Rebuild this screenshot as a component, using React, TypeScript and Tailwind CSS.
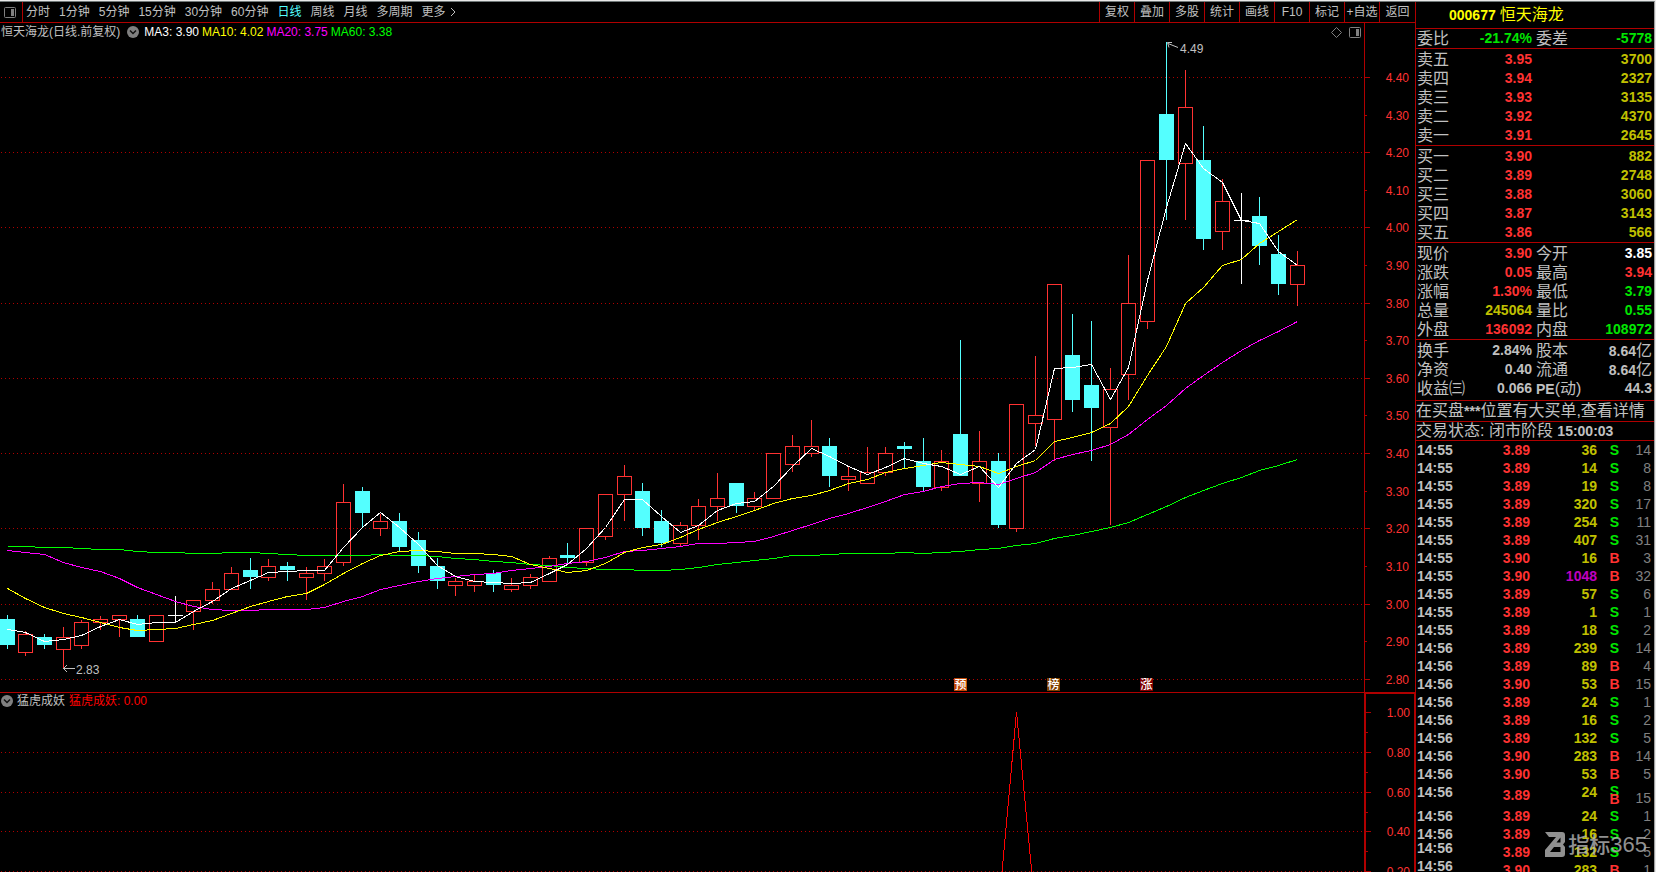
import type { ReactNode } from "react";

const CJK = "font-['Liberation_Sans','Noto_Sans_CJK_SC',sans-serif]";

type Kind = "U" | "D" | "W";
type Candle = [x: number, kind: Kind, high: number, top: number, bottom: number, low: number];

const candles: Candle[] = [
  [7, "D", 615, 619, 645, 649],
  [25, "U", 631, 634, 653, 656],
  [44, "D", 634, 637, 645, 649],
  [63, "U", 627, 637, 650, 668],
  [81, "U", 620, 622, 646, 649],
  [100, "U", 616, 619, 623, 630],
  [119, "U", 615, 615, 620, 637],
  [137, "D", 615, 619, 637, 637],
  [156, "U", 615, 615, 642, 642],
  [175, "W", 596, 615, 616, 622],
  [193, "U", 600, 600, 612, 630],
  [212, "U", 582, 589, 601, 604],
  [231, "U", 567, 573, 590, 590],
  [250, "D", 558, 570, 577, 589],
  [268, "U", 559, 566, 578, 581],
  [287, "D", 562, 566, 570, 581],
  [306, "U", 567, 573, 578, 600],
  [324, "U", 559, 566, 574, 581],
  [343, "U", 484, 502, 563, 566],
  [362, "D", 487, 491, 513, 527],
  [380, "U", 514, 521, 529, 536],
  [399, "D", 513, 521, 547, 551],
  [418, "D", 532, 540, 566, 573],
  [437, "D", 558, 566, 581, 589],
  [455, "U", 578, 581, 586, 596],
  [474, "U", 574, 581, 586, 592],
  [493, "D", 570, 573, 585, 592],
  [511, "U", 578, 585, 590, 592],
  [530, "U", 574, 577, 586, 589],
  [549, "U", 556, 558, 582, 582],
  [567, "D", 543, 555, 558, 565],
  [586, "U", 528, 528, 563, 566],
  [605, "U", 494, 494, 537, 540],
  [624, "U", 465, 476, 495, 521],
  [642, "D", 483, 491, 528, 536],
  [661, "D", 510, 521, 543, 547],
  [680, "U", 522, 525, 544, 546],
  [698, "U", 499, 506, 526, 540],
  [717, "U", 473, 498, 507, 521],
  [736, "D", 483, 483, 506, 513],
  [754, "U", 492, 498, 507, 510],
  [773, "U", 453, 453, 499, 499],
  [792, "U", 435, 446, 465, 472],
  [811, "U", 420, 446, 454, 457],
  [829, "D", 438, 446, 476, 487],
  [848, "U", 466, 476, 480, 491],
  [867, "U", 447, 472, 484, 484],
  [885, "U", 447, 453, 473, 476],
  [904, "D", 442, 446, 449, 468],
  [923, "D", 438, 461, 487, 491],
  [941, "U", 450, 461, 488, 491],
  [960, "D", 340, 434, 476, 476],
  [979, "U", 431, 461, 484, 502],
  [998, "D", 453, 461, 525, 528],
  [1016, "U", 404, 404, 529, 532],
  [1035, "U", 356, 415, 424, 446],
  [1054, "U", 284, 284, 420, 461],
  [1072, "D", 314, 355, 400, 412],
  [1091, "D", 321, 385, 408, 461],
  [1110, "U", 368, 389, 428, 525],
  [1128, "U", 255, 303, 375, 400],
  [1147, "U", 160, 160, 322, 329],
  [1166, "D", 42, 114, 160, 220],
  [1185, "U", 70, 107, 164, 220],
  [1203, "D", 126, 160, 239, 250],
  [1222, "U", 179, 201, 232, 250],
  [1241, "W", 193, 220, 221, 284],
  [1259, "D", 197, 216, 246, 265],
  [1278, "D", 235, 254, 284, 295],
  [1297, "U", 251, 265, 285, 306],
];

const averages: { color: string; ys: number[] }[] = [
  {
    color: "#00ff00",
    ys: [
      546, 546, 547, 547, 548, 549, 549, 551, 552, 552, 553, 553, 552, 552, 553, 554, 555, 555, 555, 555, 554, 555, 555,
      556, 558, 559, 561, 562, 564, 565, 567, 568, 569, 569, 570, 570, 569, 567, 564, 562, 560, 558, 555, 555, 554, 553,
      553, 553, 552, 553, 552, 551, 549, 548, 545, 543, 538, 535, 531, 527, 522, 514, 506, 497, 490, 483, 477, 470, 465,
      459,
    ],
  },
  {
    color: "#ff00ff",
    ys: [
      550, 552, 554, 562, 567, 571, 578, 587, 594, 601, 606, 609, 610, 610, 609, 609, 609, 607, 601, 596, 589, 585, 581,
      578, 576, 574, 573, 570, 568, 566, 563, 561, 557, 551, 550, 548, 546, 543, 543, 542, 541, 536, 530, 524, 518, 513,
      507, 501, 494, 491, 486, 483, 482, 484, 478, 472, 459, 454, 450, 444, 434, 419, 405, 388, 375, 362, 350, 340, 331,
      321,
    ],
  },
  {
    color: "#ffff00",
    ys: [
      588, 598, 607, 613, 617, 622, 627, 630, 629, 628, 624, 620, 613, 606, 601, 596, 593, 584, 573, 563, 555, 551, 550,
      551, 553, 553, 554, 556, 564, 568, 572, 570, 563, 552, 547, 544, 537, 529, 522, 516, 510, 503, 498, 495, 490, 483,
      479, 472, 468, 465, 462, 464, 466, 473, 466, 460, 441, 437, 432, 423, 406, 375, 346, 303, 287, 265, 259, 243, 231,
      219,
    ],
  },
  {
    color: "#ffffff",
    ys: [
      629, 632, 641, 639, 635, 626, 619, 624, 622, 622, 611, 601, 588, 580, 572, 571, 570, 570, 547, 527, 512, 527, 544,
      565, 576, 581, 582, 583, 582, 573, 564, 548, 527, 499, 499, 516, 532, 525, 510, 503, 501, 486, 466, 448, 456, 466,
      474, 467, 458, 463, 466, 474, 466, 487, 463, 449, 368, 367, 364, 399, 367, 280, 207, 143, 168, 182, 220, 223, 251,
      265,
    ],
  },
];

const priceGrid = [77, 152, 227, 303, 378, 453, 528, 604, 679];
const priceTicks = [
  77, 115, 152, 190, 227, 265, 303, 340, 378, 415, 453, 491, 528, 566, 604, 641, 679,
].map((y, i) => ({ y, label: (4.4 - i * 0.1).toFixed(2), major: i % 2 === 0 }));

const events = [
  { x: 954, label: "预", color: "#c04808" },
  { x: 1047, label: "榜", color: "#804000" },
  { x: 1140, label: "涨", color: "#800000" },
];

function PriceChart() {
  return (
    <svg className="block h-full w-full" role="img" aria-label="恒天海龙 日线">
      <g transform="translate(0 -41)">
        <g stroke="#b00000" strokeDasharray="1 3" strokeDashoffset="3" shapeRendering="crispEdges">
          {priceGrid.map((y) => (
            <line key={y} x1="0" x2="100%" y1={y + 0.5} y2={y + 0.5} />
          ))}
        </g>
        <g shapeRendering="crispEdges">
          {candles.map(([x, kind, high, top, bottom, low]) => {
            if (kind === "W") {
              return (
                <g key={x} fill="#ffffff">
                  <rect x={x} y={high} width="1" height={low - high} />
                  <rect x={x - 7} y={top} width="15" height="1" />
                </g>
              );
            }
            if (kind === "D") {
              return (
                <g key={x} fill="#54ffff">
                  <rect x={x} y={high} width="1" height={low - high} />
                  <rect x={x - 7} y={top} width="15" height={bottom - top} />
                </g>
              );
            }
            return (
              <g key={x} fill="#ff3232">
                <rect x={x} y={high} width="1" height={top - high} />
                <rect x={x} y={bottom} width="1" height={low - bottom} />
                <rect x={x - 6.5} y={top + 0.5} width="14" height={bottom - top - 1} fill="none" stroke="#ff3232" />
              </g>
            );
          })}
        </g>
        <g fill="none" shapeRendering="crispEdges">
          {averages.map(({ color, ys }) => (
            <polyline
              key={color}
              stroke={color}
              points={ys.map((y, i) => `${candles[i][0] + 0.5},${y + 0.5}`).join(" ")}
            />
          ))}
        </g>
        <g stroke="#c0c0c0" fill="none">
          <path d="M1168 43.500L1178 47.500M1172 42.500H1167.500L1169 47.500" />
          <path d="M63 668.500H75M67 665L63.500 668.500L67 672" />
        </g>
        <g fill="#c0c0c0" fontSize="12" fontFamily="Liberation Sans, sans-serif">
          <text x="1180" y="53">4.49</text>
          <text x="76" y="674">2.83</text>
        </g>
        {events.map(({ x, label, color }) => (
          <g key={label}>
            <rect x={x} y="678" width="13" height="13" fill={color} />
            <text
              x={x + 6.5}
              y="689"
              textAnchor="middle"
              fill="#ffffff"
              fontSize="12"
              fontWeight="500"
              fontFamily="Noto Sans CJK SC, sans-serif"
            >
              {label}
            </text>
          </g>
        ))}
      </g>
    </svg>
  );
}

function Axis({ ticks, offset }: { ticks: { y: number; label: string; major: boolean }[]; offset: number }) {
  return (
    <svg className="block h-full w-full" aria-hidden="true">
      <g transform={`translate(0 ${-offset})`}>
        {ticks.map(({ y, label, major }) => (
          <g key={y}>
            <rect x="0" y={y} width={major ? 5 : 2} height="1" fill="#b00000" />
            {label && (
              <text x="44" y={y + 5} textAnchor="end" fill="#ff3232" fontSize="12" fontFamily="Liberation Sans, sans-serif">
                {label}
              </text>
            )}
          </g>
        ))}
      </g>
    </svg>
  );
}

const signalTicks = [
  { y: 712, label: "1.00", major: true },
  { y: 732, label: "", major: false },
  { y: 752, label: "0.80", major: true },
  { y: 772, label: "", major: false },
  { y: 792, label: "0.60", major: true },
  { y: 812, label: "", major: false },
  { y: 831, label: "0.40", major: true },
  { y: 851, label: "", major: false },
  { y: 871, label: "0.20", major: true },
];

function SignalChart() {
  return (
    <svg className="block h-full w-full" role="img" aria-label="猛虎成妖">
      <g transform="translate(0 -709)" fill="none" shapeRendering="crispEdges">
        <g stroke="#b00000" strokeDasharray="1 3" strokeDashoffset="3">
          {[752, 792, 831, 871].map((y) => (
            <line key={y} x1="0" x2="100%" y1={y + 0.5} y2={y + 0.5} />
          ))}
        </g>
        <polyline points="998.500,911 1016.500,712 1035.500,911" stroke="#ff0000" />
      </g>
    </svg>
  );
}

function Chevron() {
  return (
    <svg className="block size-3 shrink-0" viewBox="0 0 12 12" aria-hidden="true">
      <circle cx="6" cy="6" r="6" fill="#808080" />
      <path d="M3 4.500L6 7.500L9 4.500" fill="none" stroke="#101010" strokeWidth="1.500" />
    </svg>
  );
}

function PaneIcon() {
  return (
    <svg className="block h-[11px] w-3" viewBox="0 0 12 11" aria-hidden="true">
      <rect x="0.500" y="0.500" width="11" height="10" rx="1" fill="none" stroke="#808080" />
      <rect x="7" y="2" width="3" height="7" fill="#808080" />
    </svg>
  );
}

const periods = ["分时", "1分钟", "5分钟", "15分钟", "30分钟", "60分钟", "日线", "周线", "月线", "多周期"];
const tools = ["复权", "叠加", "多股", "统计", "画线", "F10", "标记", "+自选", "返回"];

function Toolbar() {
  return (
    <header className="flex h-[21px] shrink-0 border-b border-[#b00000] text-[12px] leading-5 whitespace-nowrap text-[#c0c0c0]">
      <button type="button" aria-label="切换面板" className="flex w-[23px] items-center border-r border-[#b00000] pl-1">
        <PaneIcon />
      </button>
      <nav className="flex flex-1 gap-[9px] pl-[3px]">
        {periods.map((p) => (
          <button key={p} type="button" className={p === "日线" ? "text-[#54ffff]" : ""}>
            {p}
          </button>
        ))}
        <button type="button" className="flex items-center gap-1">
          更多
          <svg className="block h-2.5 w-1.5" viewBox="0 0 6 10" aria-hidden="true">
            <path d="M1 1L5 5L1 9" fill="none" stroke="#c0c0c0" />
          </svg>
        </button>
      </nav>
      <div className="flex">
        {tools.map((t) => (
          <button key={t} type="button" className="w-[35px] border-l border-[#b00000] text-center last:w-9">
            {t}
          </button>
        ))}
      </div>
    </header>
  );
}

type Tone = "red" | "green" | "yellow" | "gold" | "white" | "gray" | "purple";
const tones: Record<Tone, string> = {
  red: "text-[#ff3232]",
  green: "text-[#00e600]",
  yellow: "text-[#ffff00]",
  gold: "text-[#c0c000]",
  white: "text-white",
  gray: "text-[#c0c0c0]",
  purple: "text-[#c000c0]",
};

const sells = [
  ["卖五", "3.95", "3700"],
  ["卖四", "3.94", "2327"],
  ["卖三", "3.93", "3135"],
  ["卖二", "3.92", "4370"],
  ["卖一", "3.91", "2645"],
];
const buys = [
  ["买一", "3.90", "882"],
  ["买二", "3.89", "2748"],
  ["买三", "3.88", "3060"],
  ["买四", "3.87", "3143"],
  ["买五", "3.86", "566"],
];

type Stat = [string, string, Tone, string, string, Tone];
const entrust: Stat[] = [["委比", "-21.74%", "green", "委差", "-5778", "green"]];
const session: Stat[] = [
  ["现价", "3.90", "red", "今开", "3.85", "white"],
  ["涨跌", "0.05", "red", "最高", "3.94", "red"],
  ["涨幅", "1.30%", "red", "最低", "3.79", "green"],
  ["总量", "245064", "gold", "量比", "0.55", "green"],
  ["外盘", "136092", "red", "内盘", "108972", "green"],
];
const basics: Stat[] = [
  ["换手", "2.84%", "gray", "股本", "8.64亿", "gray"],
  ["净资", "0.40", "gray", "流通", "8.64亿", "gray"],
  ["收益㈢", "0.066", "gray", "PE(动)", "44.3", "gray"],
];

function Cell({ children }: { children: ReactNode }) {
  return <span className="block h-[19px] leading-[19px] whitespace-nowrap">{children}</span>;
}

function Amount({ text }: { text: string }) {
  const unit = text.endsWith("亿");
  return (
    <Cell>
      {unit ? text.slice(0, -1) : text}
      {unit && <span className="text-[16px] font-normal">亿</span>}
    </Cell>
  );
}

function Book({ rows }: { rows: string[][] }) {
  return (
    <table className="w-full table-fixed border-collapse">
      <tbody>
        {rows.map(([name, price, volume]) => (
          <tr key={name}>
            <th scope="row" className="w-12 p-0 text-left text-[16px] font-normal text-[#c0c0c0]">
              <Cell>{name}</Cell>
            </th>
            <td className="w-[67px] p-0 text-right text-[14px] font-bold text-[#ff3232]">
              <Cell>{price}</Cell>
            </td>
            <td className="p-0 text-right text-[14px] font-bold text-[#c0c000]">
              <Cell>{volume}</Cell>
            </td>
          </tr>
        ))}
      </tbody>
    </table>
  );
}

function Stats({ rows }: { rows: Stat[] }) {
  return (
    <table className="w-full table-fixed border-collapse">
      <tbody>
        {rows.map(([a, av, at, b, bv, bt]) => (
          <tr key={a}>
            <th scope="row" className="w-12 p-0 text-left text-[16px] font-normal text-[#c0c0c0]">
              <Cell>{a}</Cell>
            </th>
            <td className={`w-[67px] p-0 text-right text-[14px] font-bold ${tones[at]}`}>
              <Amount text={av} />
            </td>
            <th scope="row" className="w-[53px] p-0 pl-1 text-left text-[16px] font-normal text-[#c0c0c0]">
              <Cell>
                {b.startsWith("PE") ? (
                  <>
                    <span className="text-[14px] font-bold">PE</span>
                    {b.slice(2)}
                  </>
                ) : (
                  b
                )}
              </Cell>
            </th>
            <td className={`p-0 text-right text-[14px] font-bold ${tones[bt]}`}>
              <Amount text={bv} />
            </td>
          </tr>
        ))}
      </tbody>
    </table>
  );
}

type Trade = [time: string, price: string, volume: number, side: string, count: number];
const trades: Trade[] = [
  ["14:55", "3.89", 36, "S", 14],
  ["14:55", "3.89", 14, "S", 8],
  ["14:55", "3.89", 19, "S", 8],
  ["14:55", "3.89", 320, "S", 17],
  ["14:55", "3.89", 254, "S", 11],
  ["14:55", "3.89", 407, "S", 31],
  ["14:55", "3.90", 16, "B", 3],
  ["14:55", "3.90", 1048, "B", 32],
  ["14:55", "3.89", 57, "S", 6],
  ["14:55", "3.89", 1, "S", 1],
  ["14:55", "3.89", 18, "S", 2],
  ["14:56", "3.89", 239, "S", 14],
  ["14:56", "3.89", 89, "B", 4],
  ["14:56", "3.90", 53, "B", 15],
  ["14:56", "3.89", 24, "S", 1],
  ["14:56", "3.89", 16, "S", 2],
  ["14:56", "3.89", 132, "S", 5],
  ["14:56", "3.90", 283, "B", 14],
  ["14:56", "3.90", 53, "B", 5],
  ["14:56", "3.89", 24, "SB", 15],
  ["14:56", "3.89", 24, "S", 1],
  ["14:56", "3.89", 16, "S", 2],
  ["14:56", "3.89", 132, "S", 5],
  ["14:56", "3.90", 283, "B", 1],
];

function Trades() {
  return (
    <table className="w-full table-fixed border-collapse text-[14px] leading-[18px] font-bold">
      <tbody>
        {trades.map(([time, price, volume, side, count], i) => {
          const merged = side.length > 1;
          const scrolling = i >= trades.length - 2;
          return (
            <tr key={i} className={merged ? "h-6" : "h-[18px]"}>
              <td className={`w-12 p-0 text-[#c0c0c0] ${merged ? "align-top" : ""} ${scrolling ? "align-top leading-[10px]" : ""}`}>
                {time}
              </td>
              <td className="w-[65px] p-0 text-right text-[#ff3232]">{price}</td>
              <td
                className={`w-[67px] p-0 text-right ${merged ? "align-top" : ""} ${volume > 1000 ? tones.purple : tones.gold}`}
              >
                {volume}
              </td>
              <td className="w-[35px] p-0 text-center">
                {side.split("").map((s) => (
                  <span key={s} className={`block ${merged ? "leading-[8px]" : ""} ${s === "S" ? tones.green : tones.red}`}>
                    {s}
                  </span>
                ))}
              </td>
              <td className={`p-0 text-right font-normal text-[#808080] ${merged ? "align-bottom" : ""}`}>{count}</td>
            </tr>
          );
        })}
      </tbody>
    </table>
  );
}

function Watermark() {
  return (
    <div className="absolute right-[7px] bottom-[15px] flex items-center gap-0.5 text-[#b4b4b4] opacity-80">
      <svg className="block h-[25px] w-[21px]" viewBox="0 0 21 25" aria-hidden="true">
        <path
          fill="currentColor"
          fillRule="evenodd"
          d="M0 0H17Q20 0 20 3V10L18 12.500L20 15V22Q20 25 17 25H0V18L11 5H4ZM15.500 5.500L11.500 10.500H15.500ZM5 20H15.500V15H9Z"
        />
      </svg>
      <span className="flex items-center leading-6 font-medium">
        <span className="text-[21px]">指标</span>
        <span className="text-[22px]">365</span>
      </span>
    </div>
  );
}

function QuotePanel() {
  return (
    <aside className="relative w-[239px] shrink-0 overflow-hidden border-l border-[#b00000]">
      <div className="divide-y divide-[#b00000]">
        <h1 className="flex h-[27px] items-center gap-1 pl-[33px] text-[#ffff00]">
          <span className="text-[14px] font-bold">000677</span>
          <span className="text-[16px]">恒天海龙</span>
        </h1>
        <section className="h-5 pr-0.5 pl-px">
          <Stats rows={entrust} />
        </section>
        <section className="h-[97px] pt-px pr-0.5 pl-px">
          <Book rows={sells} />
        </section>
        <section className="h-[97px] pt-px pr-0.5 pl-px">
          <Book rows={buys} />
        </section>
        <section className="h-[97px] pt-px pr-0.5 pl-px">
          <Stats rows={session} />
        </section>
        <section className="h-[61px] pt-px pr-0.5 pl-px">
          <Stats rows={basics} />
        </section>
        <p className="h-[21px] text-[16px] leading-5 whitespace-nowrap text-[#c0c0c0]">
          在买盘<span className="text-[14px] font-bold">***</span>位置有大买单,查看详情
        </p>
        <p className="h-[19px] text-[16px] leading-[18px] whitespace-nowrap text-[#c0c0c0]">
          交易状态: 闭市阶段 <span className="text-[14px] font-bold">15:00:03</span>
        </p>
        <section className="pr-[3px] pl-px">
          <Trades />
        </section>
      </div>
      <Watermark />
    </aside>
  );
}

export default function App() {
  return (
    <div className={`h-screen overflow-hidden border-t border-r border-[#e8e8e8] bg-black ${CJK}`}>
      <div className="flex h-full border-t border-r border-t-[#707878] border-r-[#a0a0a0]">
        <main className="flex min-w-0 flex-1 flex-col">
          <Toolbar />
          <section className="flex h-[670px] shrink-0 border-b border-[#b00000]">
            <div className="flex min-w-0 flex-1 flex-col">
              <div className="flex h-[18px] items-center gap-[3px] pr-[3px] pl-px text-[12px] whitespace-nowrap text-[#c0c0c0]">
                <span className="mr-1">恒天海龙(日线.前复权)</span>
                <button type="button" aria-label="指标菜单" className="mr-0.5">
                  <Chevron />
                </button>
                <span className="text-white">MA3: 3.90</span>
                <span className="text-[#ffff00]">MA10: 4.02</span>
                <span className="text-[#ff00ff]">MA20: 3.75</span>
                <span className="flex-1 text-[#00ff00]">MA60: 3.38</span>
                <button type="button" aria-label="标记" className="mr-1">
                  <svg className="block size-[11px]" viewBox="0 0 11 11" aria-hidden="true">
                    <path d="M5.500 0.500L10.500 5.500L5.500 10.500L0.500 5.500Z" fill="none" stroke="#808080" />
                  </svg>
                </button>
                <button type="button" aria-label="布局">
                  <PaneIcon />
                </button>
              </div>
              <div className="min-h-0 flex-1">
                <PriceChart />
              </div>
            </div>
            <div className="w-[51px] border-l border-[#b00000]">
              <Axis ticks={priceTicks} offset={23} />
            </div>
          </section>
          <section className="flex min-h-0 flex-1">
            <div className="flex min-w-0 flex-1 flex-col">
              <div className="flex h-4 shrink-0 items-center gap-1 pl-px text-[12px] leading-4 whitespace-nowrap">
                <button type="button" aria-label="指标菜单">
                  <Chevron />
                </button>
                <span className="text-[#c0c0c0]">猛虎成妖</span>
                <span className="text-[#ff0000]">猛虎成妖: 0.00</span>
              </div>
              <div className="min-h-0 flex-1">
                <SignalChart />
              </div>
            </div>
            <div className="w-[51px] border-t border-r border-l-2 border-[#b00000]">
              <Axis ticks={signalTicks} offset={694} />
            </div>
          </section>
        </main>
        <QuotePanel />
      </div>
    </div>
  );
}
